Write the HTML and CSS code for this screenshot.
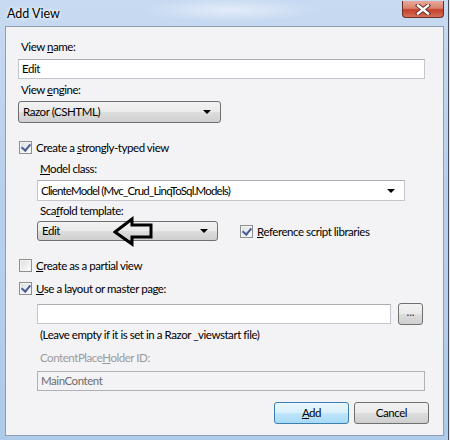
FILE: index.html
```html
<!DOCTYPE html>
<html lang="en">
<head>
    <meta charset="UTF-8">
    <title>Add View</title>
    <link rel="stylesheet" href="styles.css">
</head>
<body>

<div class="window">
    <div class="titlebar">
        <span class="title">Add View</span>
        <span class="close">
            <svg width="16" height="11" viewBox="0 0 16 11">
                <path d="M3 1.5 L13 9.5 M13 1.5 L3 9.5" stroke="#5a2a22" stroke-width="4.2" stroke-linecap="square"/>
                <path d="M3 1.5 L13 9.5 M13 1.5 L3 9.5" stroke="#fff" stroke-width="2.4" stroke-linecap="square"/>
            </svg>
        </span>
    </div>

    <div class="panel">
        <div class="label first">View <u>n</u>ame:</div>
        <div class="textbox name-box">Edit</div>

        <div class="label">View <u>e</u>ngine:</div>
        <div class="combo engine-combo">Razor (CSHTML)<span class="caret"></span></div>

        <div class="check-row typed-row"><span class="checkbox checked"></span><span>Create a <u>s</u>trongly-typed view</span></div>

        <div class="indent">
            <div class="label model-label"><u>M</u>odel class:</div>
            <div class="combo editable model-combo">ClienteModel (Mvc_Crud_LinqToSql.Models)<span class="caret"></span></div>

            <div class="label scaffold-label">Sca<u>f</u>fold template:</div>
            <div class="scaffold-row">
                <div class="combo scaffold-combo">Edit<span class="caret"></span></div>
                <div class="check-row ref-row"><span class="checkbox checked"></span><span><u>R</u>eference script libraries</span></div>
                <svg class="pointer" width="42" height="31" viewBox="0 0 42 31">
                    <polygon points="2,16 19,3 19,9 38,9 38,21 19,21 19,28" fill="none" stroke="#000" stroke-width="3" stroke-linejoin="miter"/>
                </svg>
            </div>
        </div>

        <div class="check-row partial-row"><span class="checkbox"></span><span><u>C</u>reate as a partial view</span></div>
        <div class="check-row layout-check"><span class="checkbox checked"></span><span><u>U</u>se a layout or master page:</span></div>

        <div class="indent">
            <div class="layout-row">
                <div class="textbox layout-box"></div>
                <div class="small-btn">...</div>
            </div>
            <div class="label hint">(Leave empty if it is set in a Razor _viewstart file)</div>
            <div class="label disabled placeholder-label">ContentPlace<u>H</u>older ID:</div>
            <div class="textbox disabled-box">MainContent</div>
        </div>

        <div class="buttons">
            <div class="btn default"><u>A</u>dd</div>
            <div class="btn">Cancel</div>
        </div>
    </div>
</div>

</body>
</html>
```

FILE: styles.css
```css
* { box-sizing: border-box; }
body { margin: 0; background: #dfe8f3; font-family: Lato, "Open Sans", sans-serif; font-size: 11.5px; letter-spacing: -0.45px; color: #000; }
u { text-decoration: underline; text-underline-offset: 1px; }

.window { width: 449px; height: 440px; border-right: 1px solid #4a4f57; background: linear-gradient(180deg, #c7daf1 0%, #b9d0ec 40%, #aecbea 100%); display: flex; flex-direction: column; }
.titlebar { height: 26px; display: flex; align-items: flex-start; padding: 0 4px 0 7px; background: radial-gradient(ellipse 90px 12px at 230px 10px, rgba(230, 238, 250, 0.9), rgba(230, 238, 250, 0) 100%); }
.title { font-size: 12.5px; letter-spacing: 0; line-height: 15px; margin-top: 6px; text-shadow: 0 0 6px #fff, 0 0 3px #fff; }
.close { margin-left: auto; margin-top: 1px; width: 42px; height: 17px; border: 1px solid #6b2c24; border-top: none; border-radius: 0 0 4px 4px; background: linear-gradient(180deg, #e9a99c 0%, #d9826f 45%, #c4412b 55%, #d2705b 100%); display: flex; align-items: center; justify-content: center; }

.panel { flex: 1; margin: 0 4px 4px 5px; border: 1px solid #8d9db3; background: #f3f2f5; padding: 0 14px 0 12px; display: flex; flex-direction: column; align-items: flex-start; }

.label { margin-left: 3px; line-height: 15px; height: 15px; margin-top: 3px; white-space: nowrap; }
.label.first { margin-top: 12px; }
.label.disabled { color: #9a9a9a; }

.textbox { height: 20px; line-height: 18px; padding-left: 3px; background: #fff; border: 1px solid #c3c6cc; border-top-color: #abadb3; white-space: nowrap; }
.name-box { width: 407px; margin-top: 5px; }

.combo { position: relative; height: 22px; line-height: 20px; padding-left: 4px; border: 1px solid #707070; border-radius: 3px; background: linear-gradient(180deg, #f2f2f2 0%, #ebebeb 48%, #dddddd 52%, #cfcfcf 100%); white-space: nowrap; }
.combo.editable { background: #fff; border: 1px solid #c3c6cc; border-top-color: #abadb3; border-radius: 0; }
.caret { position: absolute; right: 9px; top: 50%; margin-top: -2px; border-left: 4px solid transparent; border-right: 4px solid transparent; border-top: 4px solid #000; }
.engine-combo { width: 203px; margin-top: 4px; }

.check-row { display: flex; align-items: center; height: 15px; line-height: 15px; margin-left: 1px; white-space: nowrap; }
.checkbox { position: relative; width: 13px; height: 13px; margin-right: 4px; border: 1px solid #8e8f8f; background: linear-gradient(135deg, #dcdcdc 0%, #ffffff 100%); box-shadow: inset 0 0 0 1px #f4f4f4; }
.checkbox.checked::after { content: ""; position: absolute; left: 3px; top: 0px; width: 4px; height: 7px; border-right: 2px solid #4a5f97; border-bottom: 2px solid #4a5f97; transform: rotate(40deg); }
.typed-row { margin-top: 17px; }

.indent { margin-left: 19px; display: flex; flex-direction: column; align-items: flex-start; }
.model-label { margin-top: 6px; }
.model-combo { width: 368px; height: 21px; line-height: 19px; margin-top: 4px; padding-left: 3px; letter-spacing: -0.8px; }
.scaffold-label { margin-top: 2px; }

.scaffold-row { position: relative; display: flex; align-items: center; margin-top: 3px; }
.scaffold-combo { width: 181px; height: 20px; line-height: 18px; }
.ref-row { margin-left: 22px; }
.pointer { position: absolute; left: 76px; top: -5px; }

.partial-row { margin-top: 17px; }
.layout-check { margin-top: 8px; }

.layout-row { display: flex; align-items: center; margin-top: 7px; height: 22px; }
.layout-box { width: 354px; }
.small-btn { width: 25px; height: 22px; margin-left: 7px; border: 1px solid #707070; border-radius: 3px; background: linear-gradient(180deg, #f2f2f2 0%, #ebebeb 48%, #dddddd 52%, #cfcfcf 100%); text-align: center; line-height: 16px; letter-spacing: 0; color: #333; }
.hint { margin-top: 2px; }
.placeholder-label { margin-top: 8px; }
.disabled-box { width: 388px; margin-top: 6px; background: #f3f2f5; border-color: #adb2b5; color: #6d6d6d; }

.buttons { align-self: flex-end; display: flex; gap: 5px; margin-top: 11px; }
.btn { width: 75px; height: 22px; line-height: 20px; text-align: center; border: 1px solid #707070; border-radius: 3px; background: linear-gradient(180deg, #f2f2f2 0%, #ebebeb 48%, #dddddd 52%, #cfcfcf 100%); }
.btn.default { border-color: #3c7fb1; background: linear-gradient(180deg, #eaf6fd 0%, #d9f0fc 48%, #bee6fd 52%, #a7d9f5 100%); }
```
